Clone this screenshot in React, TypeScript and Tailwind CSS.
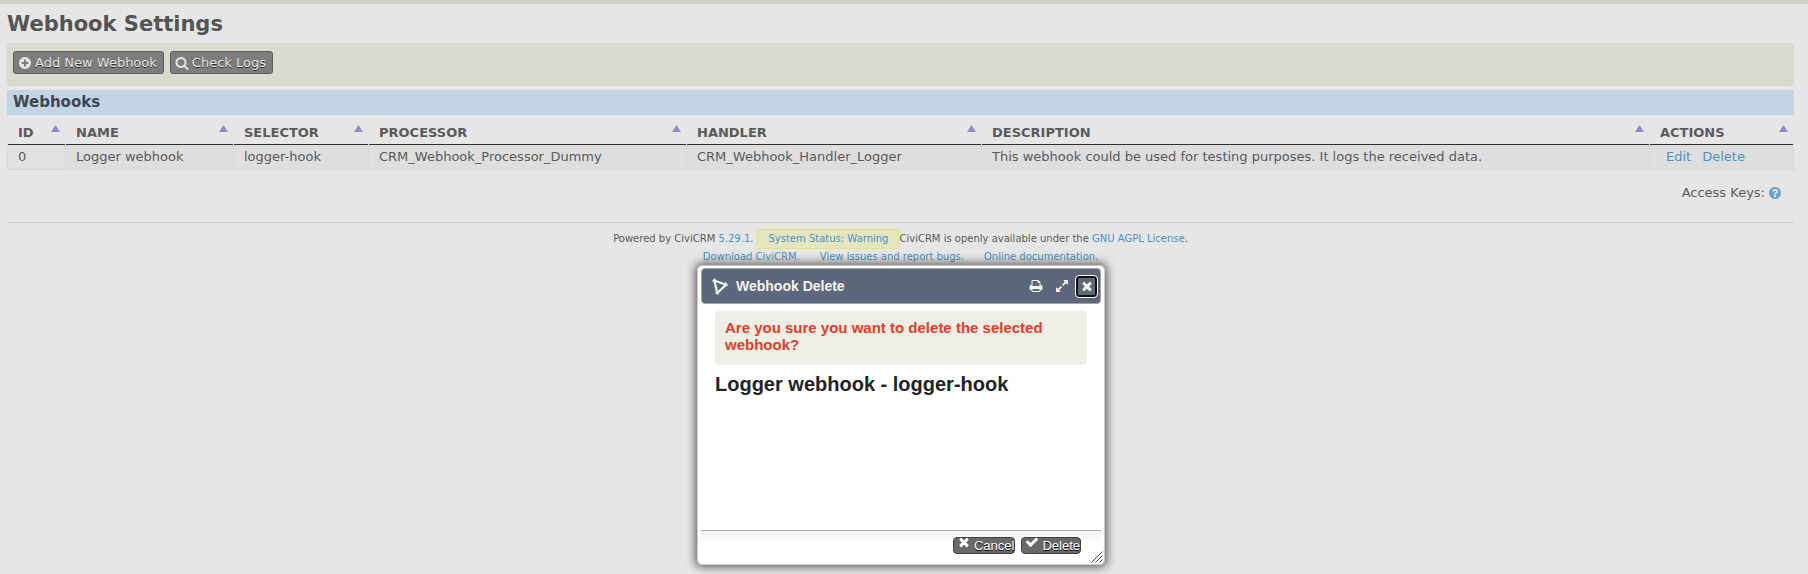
import type { ReactNode } from "react";

const ICONS = {
  plusCircle:
    "M1344 960v-128q0-26-19-45t-45-19h-256v-256q0-26-19-45t-45-19h-128q-26 0-45 19t-19 45v256h-256q-26 0-45 19t-19 45v128q0 26 19 45t45 19h256v256q0 26 19 45t45 19h128q26 0 45-19t19-45v-256h256q26 0 45-19t19-45zm320-64q0 209-103 385.5t-279.5 279.5-385.5 103-385.5-103-279.5-279.5-103-385.5 103-385.5 279.5-279.5 385.5-103 385.5 103 279.5 279.5 103 385.5z",
  search:
    "M1216 832q0-185-131.5-316.5t-316.5-131.5-316.5 131.5-131.5 316.5 131.5 316.5 316.5 131.5 316.5-131.5 131.5-316.5zm512 832q0 52-38 90t-90 38q-54 0-90-38l-343-342q-179 124-399 124-143 0-273.5-55.5t-225-150-150-225-55.5-273.5 55.5-273.5 150-225 225-150 273.5-55.5 273.5 55.5 225 150 150 225 55.5 273.5q0 220-124 399l343 343q37 37 37 90z",
  print:
    "M448 1536h896v-256h-896v256zm0-640h896v-384h-160q-40 0-68-28t-28-68v-160h-640v640zm1152 64q0-26-19-45t-45-19-45 19-19 45 19 45 45 19 45-19 19-45zm128 0v416q0 13-9.5 22.5t-22.5 9.5h-224v160q0 40-28 68t-68 28h-960q-40 0-68-28t-28-68v-160h-224q-13 0-22.5-9.5t-9.5-22.5v-416q0-79 56.5-135.5t135.5-56.5h64v-544q0-40 28-68t68-28h672q40 0 88 20t76 48l152 152q28 28 48 76t20 88v256h64q79 0 135.5 56.5t56.5 135.5z",
  expand:
    "M883 1056q0 13-10 23l-332 332 144 144q19 19 19 45t-19 45-45 19h-448q-26 0-45-19t-19-45v-448q0-26 19-45t45-19 45 19l144 144 332-332q10-10 23-10t23 10l114 114q10 10 10 23zm781-864v448q0 26-19 45t-45 19-45-19l-144-144-332 332q-10 10-23 10t-23-10l-114-114q-10-10-10-23t10-23l332-332-144-144q-19-19-19-45t19-45 45-19h448q26 0 45 19t19 45z",
  times:
    "M1490 1322q0 40-28 68l-136 136q-28 28-68 28t-68-28l-294-294-294 294q-28 28-68 28t-68-28l-136-136q-28-28-28-68t28-68l294-294-294-294q-28-28-28-68t28-68l136-136q28-28 68-28t68 28l294 294 294-294q28-28 68-28t68 28l136 136q28 28 28 68t-28 68l-294 294 294 294q28 28 28 68z",
  check:
    "M1671 566q0 40-28 68l-724 724-136 136q-28 28-68 28t-68-28l-136-136-362-362q-28-28-28-68t28-68l136-136q28-28 68-28t68 28l294 295 656-657q28-28 68-28t68 28l136 136q28 28 28 68z",
  question:
    "M1024 1376v-192q0-14-9-23t-23-9h-192q-14 0-23 9t-9 23v192q0 14 9 23t23 9h192q14 0 23-9t9-23zm256-672q0-88-55.5-163t-138.5-116-170-41q-243 0-371 213-15 24 8 42l132 100q7 6 19 6 16 0 25-12 53-68 86-92 34-24 86-24 48 0 85.5 26t37.5 59q0 38-20 61t-68 45q-63 28-115.5 86.5t-52.5 125.5v36q0 14 9 23t23 9h192q14 0 23-9t9-23q0-19 21.5-49.5t54.5-49.5q32-18 49-28.5t46-35 44.5-48 28-60.5 12.5-81zm384 192q0 209-103 385.5t-279.5 279.5-385.5 103-385.5-103-279.5-279.5-103-385.5 103-385.5 279.5-279.5 385.5-103 385.5 103 279.5 279.5 103 385.5z",
};

function Icon({ name, className = "size-3.5" }: { name: keyof typeof ICONS; className?: string }) {
  return (
    <svg viewBox="0 0 1792 1792" className={`shrink-0 fill-current ${className}`} aria-hidden="true">
      <path d={ICONS[name]} />
    </svg>
  );
}

function BarButton({ icon, children }: { icon: keyof typeof ICONS; children: ReactNode }) {
  return (
    <a
      href="#"
      className="flex h-[23px] items-center gap-[3px] rounded-[3px] border border-[#5c5c5c] bg-[#7d7d7d] pr-1.5 pl-1 text-[#e4e4e4] [text-shadow:0_1px_0_#333]"
    >
      <Icon name={icon} />
      {children}
    </a>
  );
}

function DialogButton({ icon, children }: { icon: keyof typeof ICONS; children: ReactNode }) {
  return (
    <button
      type="button"
      className="flex h-[17px] items-center gap-[3px] rounded-[4px] border border-[#3e3e3e] bg-[#696969] pl-[3px] text-[13px] leading-4 text-white [text-shadow:0_1px_0_#000]"
    >
      <Icon name={icon} className="mb-2 size-3.5" />
      {children}
    </button>
  );
}

const COLUMNS = [
  { title: "ID", width: "w-[59px]" },
  { title: "Name", width: "w-[168px]" },
  { title: "Selector", width: "w-[135px]" },
  { title: "Processor", width: "w-[318px]" },
  { title: "Handler", width: "w-[295px]" },
  { title: "Description", width: "w-auto" },
  { title: "Actions", width: "w-[144px]" },
];

const CELLS = [
  "Logger webhook",
  "logger-hook",
  "CRM_Webhook_Processor_Dummy",
  "CRM_Webhook_Handler_Logger",
  "This webhook could be used for testing purposes. It logs the received data.",
];

const LINK = "text-[#4a93c2]";

function Dialog() {
  return (
    <div
      role="dialog"
      aria-labelledby="dialog-title"
      className="flex h-[300px] w-[408px] flex-col rounded-[5px] border border-[#ccc] bg-white p-[3px] pt-0.5 font-['Liberation_Sans',sans-serif] shadow-[0_0_10px_2px_rgba(0,0,0,0.6)]"
    >
      <div className="flex h-9 shrink-0 items-center rounded-[4px] border border-[#a2a3a8] bg-[#5d677b] pr-[3px] pl-2.5 text-[#f4f4ee]">
        <svg viewBox="0 0 16 17" className="h-[17px] w-4 shrink-0 fill-none stroke-current" aria-hidden="true">
          <path d="M2.300 2.500 14 6.700 5.300 15Z" strokeWidth="2.200" strokeLinejoin="round" />
          <path d="M1 3 2.800 1.200M13.600 5 15 7.500M4 15 6 15.800" strokeWidth="1.600" strokeLinecap="round" />
        </svg>
        <h2 id="dialog-title" className="ml-2 flex-1 text-[14px] font-bold">
          Webhook Delete
        </h2>
        <div className="flex items-center gap-3">
          <button type="button" aria-label="Print">
            <Icon name="print" />
          </button>
          <button type="button" aria-label="Expand">
            <Icon name="expand" />
          </button>
        </div>
        <button
          type="button"
          aria-label="Close"
          className="ml-[7px] flex size-[21px] items-center justify-center rounded-[3px] border-2 border-[#101010] outline outline-white"
        >
          <Icon name="times" className="size-3.5" />
        </button>
      </div>
      <div className="flex-1 px-3.5 pt-[7px]">
        <p className="h-[54px] rounded-[4px] bg-[#efefe5] px-2.5 pt-2 text-[15px] leading-[17px] font-bold text-[#e43d2b]">
          Are you sure you want to delete the selected webhook?
        </p>
        <h3 className="mt-[7px] text-[20px] leading-6 font-bold text-[#222]">Logger webhook - logger-hook</h3>
      </div>
      <div className="flex h-[31px] shrink-0 items-start justify-end gap-1.5 border-t border-[#aaa] bg-linear-to-b from-[#f0f0f0] to-white to-40% pt-1.5 pr-5">
        <DialogButton icon="times">Cancel</DialogButton>
        <DialogButton icon="check">Delete</DialogButton>
      </div>
      <svg
        viewBox="0 0 12 12"
        className="absolute right-0.5 bottom-0.5 size-3 fill-none stroke-[#444]"
        aria-hidden="true"
      >
        <path d="M.5 11.500 11.500.5M4.500 11.500 11.500 4.500M8.500 11.500 11.500 8.500" />
      </svg>
    </div>
  );
}

export default function App() {
  return (
    <div className="relative min-h-screen border-t-4 border-[#d0d0c7] bg-[#e6e6e6] pr-3.5 pl-[7px] font-['DejaVu_Sans',sans-serif] text-[13px] leading-4 text-[#5b5b5b]">
      <h1 className="pt-[7px] text-[21px] leading-[26px] font-bold text-[#545454]">Webhook Settings</h1>

      <div className="mt-1.5 flex h-[43px] gap-1.5 rounded-[4px] bg-[#dadad1] px-1.5 pt-2">
        <BarButton icon="plusCircle">Add New Webhook</BarButton>
        <BarButton icon="search">Check Logs</BarButton>
      </div>

      <h2 className="mt-1 h-[25px] bg-[#c3d5e4] px-1.5 text-[15px] leading-[24px] font-bold text-[#3e4654]">
        Webhooks
      </h2>

      <table className="mt-1.5 w-full table-fixed border-separate border-spacing-0 text-left">
        <thead>
          <tr className="[&>th:first-child]:pl-px">
            {COLUMNS.map((column) => (
              <th key={column.title} className={`${column.width} h-6 py-0 pr-px pl-0 font-bold uppercase`}>
                <div className="flex h-6 justify-between border-b border-[#2e2e2e] pr-[5px] pl-2.5">
                  <span className="pt-1">{column.title}</span>
                  <svg viewBox="0 0 9 7" className="mt-1 h-[7px] w-[9px] fill-[#8c8ccc]" aria-hidden="true">
                    <path d="M4.500 0 9 7H0Z" />
                  </svg>
                </div>
              </th>
            ))}
          </tr>
        </thead>
        <tbody>
          <tr className="h-[25px] bg-[#dedede] [&>td]:border-r [&>td]:border-b [&>td]:border-[#d9d9d9] [&>td]:px-2.5 [&>td]:py-0 [&>td:first-child]:border-l">
            <td className="bg-[#e1e1e1]">0</td>
            {CELLS.map((cell) => (
              <td key={cell}>{cell}</td>
            ))}
            <td>
              <div className="flex gap-[11px] pl-1.5">
                <a href="#" className={LINK}>
                  Edit
                </a>
                <a href="#" className={LINK}>
                  Delete
                </a>
              </div>
            </td>
          </tr>
        </tbody>
      </table>

      <div className="mt-[15px] flex items-center justify-end gap-[3px] pr-3">
        Access Keys:
        <a href="#" aria-label="Help" className="text-[#69a4c9]">
          <Icon name="question" />
        </a>
      </div>

      <footer className="mt-[21px] border-t border-[#cdcdcd] pt-1.5 text-center text-[10px] leading-[18px]">
        <div className="flex items-center justify-center">
          <span>
            Powered by CiviCRM{" "}
            <a href="#" className={LINK}>
              5.29.1
            </a>
            .
          </span>
          <a href="#" className={`ml-1 border border-[#e5e580] bg-[#e5e5c1] px-2.5 ${LINK}`}>
            System Status: Warning
          </a>
          <span>
            CiviCRM is openly available under the{" "}
            <a href="#" className={LINK}>
              GNU AGPL License
            </a>
            .
          </span>
        </div>
        <div className="flex justify-center gap-5 leading-4">
          <a href="#" className={LINK}>
            Download CiviCRM.
          </a>
          <a href="#" className={LINK}>
            View issues and report bugs.
          </a>
          <a href="#" className={LINK}>
            Online documentation.
          </a>
        </div>
      </footer>

      <div className="absolute inset-x-0 top-[261px] flex justify-center pr-[13px] pl-[7px]">
        <div className="relative">
          <Dialog />
        </div>
      </div>
    </div>
  );
}
